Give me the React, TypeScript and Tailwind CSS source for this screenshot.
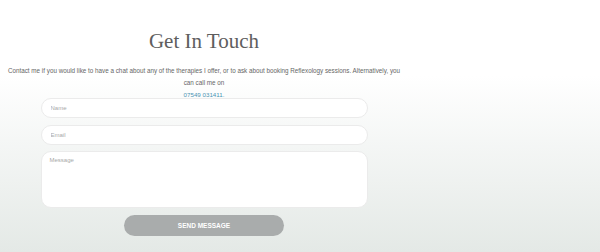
import React from 'react';

export default function App() {
  return (
    <div className="w-[600px] h-[252px] overflow-hidden bg-gradient-to-b from-white from-30% to-[#e4e9e6] font-['Liberation_Sans',Arial,sans-serif]">
      <div className="w-[408px] flex flex-col items-center text-center">
        <h1 className="mt-[27px] h-[28px] text-[21px] leading-[28px] text-[#5e5e5e] font-['Liberation_Serif','Times_New_Roman',serif]">
          Get In Touch
        </h1>
        <p className="mt-[10px] px-[6px] text-[6.3px] leading-[12px] text-[#666]">
          Contact me if you would like to have a chat about any of the therapies I offer, or to ask about booking Reflexology sessions. Alternatively, you can call me on
        </p>
        <p className="text-[6.2px] leading-[11px] text-[#4a94b3]">07549 031411.</p>

        {/* Form */}
        <form className="-mt-[2px] w-[327px] flex flex-col gap-[7px]">
          <input
            className="h-[20px] rounded-[10px] border border-[#ebebeb] bg-white px-[9px] text-[6px] text-[#444] placeholder:text-[#a8a8a8] outline-none"
            placeholder="Name"
          />
          <input
            className="h-[20px] rounded-[10px] border border-[#ebebeb] bg-white px-[9px] text-[6px] text-[#444] placeholder:text-[#a8a8a8] outline-none"
            placeholder="Email"
          />
          <textarea
            className="h-[57px] -mt-[1px] resize-none rounded-[10px] border border-[#ebebeb] bg-white px-[8px] py-[4px] text-[6px] text-[#444] placeholder:text-[#a8a8a8] outline-none"
            placeholder="Message"
          />
        </form>
        <button
          type="button"
          className="mt-[7px] h-[21px] w-[160px] rounded-full bg-[#a9acac] text-[6.5px] font-bold text-white"
        >
          SEND MESSAGE
        </button>
      </div>
    </div>
  );
}
